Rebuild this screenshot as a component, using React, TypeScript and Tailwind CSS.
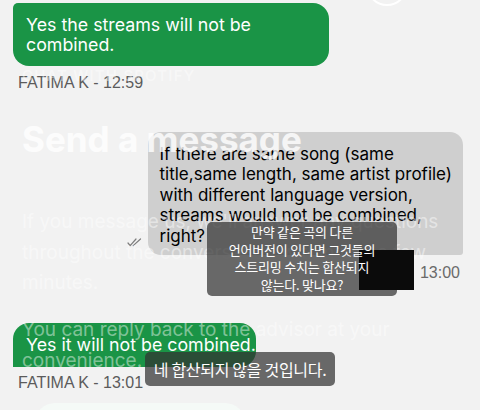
import React from "react";

const inter = { fontFamily: "Inter, 'Noto Sans', sans-serif" };

function DoubleCheck() {
  return (
    <svg width="15" height="9" viewBox="0 0 15 9" fill="none" stroke="#7d7d7d" strokeWidth="1.2" strokeLinecap="round" strokeLinejoin="round">
      <path d="M1 5 L3.2 7.6 L9 1" />
      <path d="M6.2 7.6 L13.5 1" />
    </svg>
  );
}

function Chat() {
  return (
    <div className="flex flex-col pt-[3px] font-['Inter','Noto_Sans',sans-serif]">
      <div className="ml-[13px] h-[63px] w-[316px] rounded-[16px] rounded-tl-[5px] bg-[#1a9446] pl-[13px] pt-[11.5px] text-[17.8px] leading-[20px] text-white">
        Yes the streams will not be
        <br />
        combined.
      </div>
      <div className="ml-[18px] mt-[7px] font-['Liberation_Sans',Arial,sans-serif] text-[16px] leading-[20px] text-[#5b5b5b]">
        FATIMA K - 12:59
      </div>

      <div className="mt-[39px] flex items-end justify-end gap-[6px] pr-[17px]">
        <div className="mb-[8px]">
          <DoubleCheck />
        </div>
        <div className="h-[123px] w-[315px] rounded-[13px] rounded-br-[3px] bg-[#cfcfcf] pl-[11.5px] pt-[11.5px] text-[17px] leading-[20.5px] text-black">
          If there are same song (same
          <br />
          title,same length, same artist profile)
          <br />
          with different language version,
          <br />
          streams would not be combined,
          <br />
          right?
        </div>
      </div>
      <div className="mr-[20px] mt-[7.5px] self-end font-['Liberation_Sans',Arial,sans-serif] text-[16px] leading-[20px] text-[#6a6a6a]">
        13:00
      </div>

      <div className="ml-[13px] mt-[40px] h-[44px] w-[243px] rounded-[16px] rounded-bl-none bg-[#1a9446] pl-[13px] pt-[12.5px] text-[17.8px] leading-[20px] text-white">
        Yes it will not be combined.
      </div>
      <div className="ml-[18px] mt-[6.5px] font-['Liberation_Sans',Arial,sans-serif] text-[16px] leading-[20px] text-[#5b5b5b]">
        FATIMA K - 13:01
      </div>
      <div className="ml-[35px] mt-[10px] h-[40px] w-[210px] rounded-[20px] bg-[#f5faf7]" />
    </div>
  );
}

function Ghost() {
  return (
    <div className="pointer-events-none absolute inset-0 pl-[22px] text-white/45" style={inter}>
      <svg className="absolute left-[363px] top-[-39px]" width="48" height="48" viewBox="0 0 48 48" fill="none">
        <circle cx="24" cy="24" r="20" stroke="white" strokeWidth="2" />
      </svg>
      <div className="pt-[66px] text-[15px] font-medium leading-[20px] tracking-[1.2px]">CHAT WITH SPOTIFY</div>
      <div className="mt-[33px] text-[35px] font-bold leading-[40px] text-white/80">Send a message</div>
      <p className="mt-[48px] text-[19px] leading-[30.5px]">
        If you message us, we'll answer any questions
        <br />
        throughout the conversation within just a few
        <br />
        minutes.
      </p>
      <p className="mt-[16.5px] text-[19px] leading-[30.5px]">
        You can reply back to the advisor at your
        <br />
        convenience.
      </p>
    </div>
  );
}

function Translations() {
  return (
    <>
      <div className="absolute left-[207px] top-[222px] h-[74px] w-[190px] rounded-[5px] bg-[rgba(50,50,50,0.72)]">
        <div className="absolute left-[152px] top-[28px] h-[40px] w-[55px] bg-[#0b0b0b]" />
        <p className="relative pt-[1px] text-center font-['Noto_Sans_CJK_KR',sans-serif] text-[13px] leading-[17.5px] tracking-[-0.2px] text-white">
          만약 같은 곡의 다른
          <br />
          언어버전이 있다면 그것들의
          <br />
          스트리밍 수치는 합산되지
          <br />
          않는다. 맞나요?
        </p>
      </div>
      <div className="absolute left-[145px] top-[352px] flex h-[34px] w-[190px] items-center justify-center rounded-[5px] bg-[rgba(50,50,50,0.72)] font-['Noto_Sans_CJK_KR',sans-serif] text-[16px] tracking-[-0.3px] text-white">
        네 합산되지 않을 것입니다.
      </div>
    </>
  );
}

export default function App() {
  return (
    <div className="relative h-[410px] w-[480px] overflow-hidden bg-[#f2f2f2]">
      <Chat />
      <Ghost />
      <Translations />
    </div>
  );
}
